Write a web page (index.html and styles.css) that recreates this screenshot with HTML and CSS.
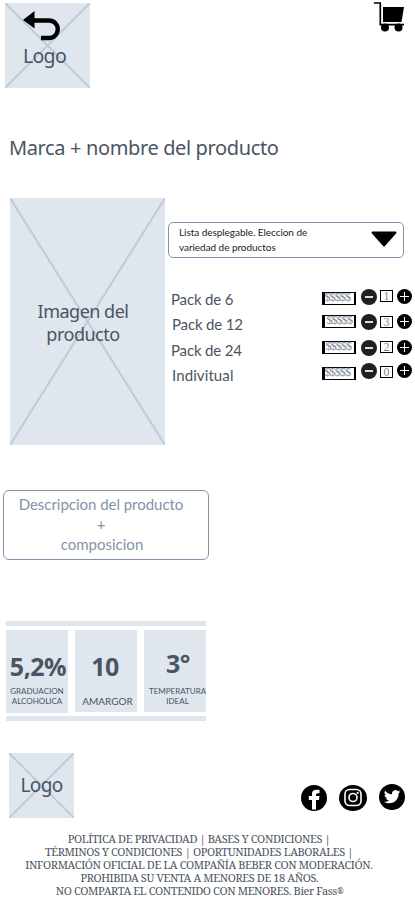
FILE: index.html
```html
<!DOCTYPE html>
<html lang="es">
<head>
<meta charset="utf-8">
<title>Marca + nombre del producto</title>
<link rel="stylesheet" href="styles.css">
</head>
<body>
<header class="top">
  <div class="box logo">
    <svg class="cross" viewBox="0 0 85 85" preserveAspectRatio="none"><path d="M0 0L85 85M85 0L0 85"/></svg>
    <svg class="back" viewBox="0 0 38 30"><path d="M9 9.500H26A8.700 8.700 0 0 1 26 27H18" fill="none" stroke="#000" stroke-width="4.400"/><path d="M0 9L11.500 0V17.500Z"/></svg>
    <span class="logo-text">Logo</span>
  </div>
  <svg class="cart" viewBox="0 0 31 30"><path d="M0 1H6.300V22.700H30" fill="none" stroke="#000" stroke-width="1.700"/><path d="M9 5H30L27.500 20H9Z"/><circle cx="11" cy="25.500" r="4"/><circle cx="24.500" cy="25.500" r="4"/></svg>
</header>
<h1 class="title">Marca + nombre del producto</h1>
<main class="product">
  <div class="box photo">
    <svg class="cross" viewBox="0 0 155 247" preserveAspectRatio="none"><path d="M0 0L155 247M155 0L0 247"/></svg>
    <span class="photo-text">Imagen del<br>producto</span>
  </div>
  <div class="options">
    <div class="select">
      <span>Lista desplegable. Eleccion de<br>variedad de productos</span>
      <svg class="caret" viewBox="0 0 26 16"><path d="M1.500 1.500H24.500L13 14.500Z" stroke="#000" stroke-width="2" stroke-linejoin="round"/></svg>
    </div>
    <div class="row r1"><span class="name">Pack de 6</span><span class="price">$$$$$</span><span class="btn minus"></span><span class="qty">1</span><span class="btn plus"></span></div>
    <div class="row r2"><span class="name">Pack de 12</span><span class="price">$$$$$</span><span class="btn minus"></span><span class="qty">3</span><span class="btn plus"></span></div>
    <div class="row r3"><span class="name">Pack de 24</span><span class="price">$$$$$</span><span class="btn minus"></span><span class="qty">2</span><span class="btn plus"></span></div>
    <div class="row r4"><span class="name">Indivitual</span><span class="price">$$$$$</span><span class="btn minus"></span><span class="qty">0</span><span class="btn plus"></span></div>
  </div>
</main>
<section class="description"><span class="d1">Descripcion del producto</span><span class="d2">+</span><span class="d3">composicion</span></section>
<section class="facts">
  <div class="card abv"><b>5,2%</b><small>GRADUACION<br>ALCOHOLICA</small></div>
  <div class="card ibu"><b>10</b><small>AMARGOR</small></div>
  <div class="card temp"><b>3°</b><small>TEMPERATURA<br>IDEAL</small></div>
</section>
<footer>
  <div class="brand">
    <div class="box foot-logo">
      <svg class="cross" viewBox="0 0 65 65" preserveAspectRatio="none"><path d="M0 0L65 65M65 0L0 65"/></svg>
      <span class="foot-text">Logo</span>
    </div>
    <div class="social">
      <svg class="fb" viewBox="0 0 26 26"><circle cx="13" cy="13" r="13"/><path d="M11 24.500V15H7.800V11H11V9Q11 4.800 15.500 4.800H18.500V8.300H16.800Q15 8.300 15 9.800V11H18.500L18 15H15V24.500Z" fill="#fff"/></svg>
      <svg class="ig" viewBox="0 0 28 28"><ellipse cx="14" cy="14" rx="14" ry="13"/><g fill="none" stroke="#fff" stroke-width="1.600"><rect x="6" y="5.500" width="16" height="16" rx="4.500"/><circle cx="14" cy="13.500" r="4"/></g><circle cx="18.700" cy="8.900" r="1.100" fill="#fff"/></svg>
      <svg class="tw" viewBox="0 0 26 26"><circle cx="13" cy="13" r="13"/><path transform="translate(5 4.500) scale(.68)" d="M23.950 4.570a10 10 0 0 1-2.820.77 4.960 4.960 0 0 0 2.160-2.720c-.950.550-2 .950-3.130 1.180a4.920 4.920 0 0 0-8.380 4.480C7.690 8.090 4.070 6.130 1.640 3.160a4.920 4.920 0 0 0 1.520 6.570 4.900 4.900 0 0 1-2.230-.61v.060a4.920 4.920 0 0 0 3.950 4.830 5 5 0 0 1-2.210.080 4.940 4.940 0 0 0 4.600 3.420A9.870 9.870 0 0 1 0 19.540a13.990 13.990 0 0 0 7.550 2.210c9.050 0 14-7.500 14-13.980 0-.21 0-.42-.020-.63a9.940 9.940 0 0 0 2.420-2.570z" fill="#fff"/></svg>
    </div>
  </div>
  <div class="legal">
    <p class="l1">POLÍTICA DE PRIVACIDAD | BASES Y CONDICIONES |</p>
    <p class="l2">TÉRMINOS Y CONDICIONES | OPORTUNIDADES LABORALES |</p>
    <p class="l3">INFORMACIÓN OFICIAL DE LA COMPAÑÍA BEBER CON MODERACIÓN.</p>
    <p class="l4">PROHIBIDA SU VENTA A MENORES DE 18 AÑOS.</p>
    <p class="l5">NO COMPARTA EL CONTENIDO CON MENORES. Bier Fass<span class="reg">®</span></p>
  </div>
</footer>
</body>
</html>
```
FILE: styles.css
```css
* { box-sizing: border-box; }
body { margin: 0; width: 415px; height: 915px; overflow: hidden; background: #fff; color: #4a5462; font-family: Lato, sans-serif; }
svg { display: block; flex: none; overflow: visible; }
.box { position: relative; background: #dfe6ee; flex: none; font-family: "Noto Sans", sans-serif; }
.cross { position: absolute; inset: 0; width: 100%; height: 100%; stroke: #c0cbda; stroke-width: 2; overflow: hidden; }
.top { display: flex; justify-content: space-between; padding: 3px 10px 0 5px; height: 88px; }
.logo { width: 85px; height: 85px; padding: 8px 0 0 18px; }
.back { position: relative; width: 38px; height: 30px; }
.logo-text { position: relative; display: block; font-size: 19.5px; letter-spacing: -.7px; line-height: 26px; margin-top: 2px; }
.cart { width: 31px; height: 30px; margin-top: -1px; }
.title { margin: 45px 0 0 9px; height: 65px; font: 400 20px/30px "Noto Sans", sans-serif; letter-spacing: -.37px; white-space: nowrap; }
.product { display: flex; padding-left: 10px; height: 247px; }
.photo { width: 155px; height: 247px; padding: 102px 9px 0 0; text-align: center; font-size: 18px; letter-spacing: -.5px; line-height: 23px; }
.photo-text { position: relative; }
.options { width: 250px; padding: 24px 0 0 3px; }
.select { width: 236px; height: 36px; border: 1px solid #8494ad; border-radius: 5px; display: flex; justify-content: space-between; padding: 2px 6px 0 10px; font-size: 10px; letter-spacing: -.05px; line-height: 15px; color: #222; white-space: nowrap; }
.caret { width: 26px; height: 16px; margin-top: 6px; }
.row { display: grid; grid-template-columns: 154px 39px 19px 17px 16px; align-items: start; height: 25px; }
.r1 { margin-top: 29px; }
.r2 { height: 26px; }
.name { padding-left: 3px; font-size: 15px; letter-spacing: -.15px; line-height: 25px; }
.r2 .name { padding-left: 4px; }
.r4 .name { padding-left: 4px; letter-spacing: .1px; }
.price { width: 34px; height: 13px; margin: 5px 0 0 -.5px; border: 1px solid #000; border-width: 1px 2px 1px 3px; font: 12px/9px "Liberation Serif", serif; letter-spacing: -.9px; color: #7d8795; text-align: left; white-space: nowrap; }
.r2 .price { margin-top: 3px; padding-left: 2px; }
.r3 .price { margin-top: 3px; padding-left: 1px; }
.r4 .price { margin-top: 4px; }
.qty { width: 13px; height: 12px; margin-top: 3px; border: 1px solid #000; font: 12px/11px "Liberation Serif", serif; color: #7d8795; text-align: center; }
.r2 .qty { margin-top: 4px; }
.btn { position: relative; display: grid; place-items: center; width: 16px; height: 16px; margin-top: 2px; border-radius: 50%; background: #231f20; }
.r4 .btn { margin-top: 0; }
.btn::before { content: ""; width: 8px; height: 2px; background: #ddd; grid-area: 1 / 1; }
.plus { width: 15px; height: 15px; background: #000; }
.plus::before { width: 9px; height: 1px; background: #fff; }
.plus::after { content: ""; width: 1px; height: 9px; background: #fff; grid-area: 1 / 1; }
.description { margin: 45px 0 0 3px; width: 206px; height: 70px; border: 1px solid #8494ad; border-radius: 6px; padding: 3px 10px 0 0; text-align: center; color: #8293ab; font-size: 15px; line-height: 20px; }
.description span { display: block; }
.d1 { letter-spacing: -.03px; }
.d3 { padding-left: 2px; }
.facts { margin: 61px 0 0 6px; width: 200px; height: 100px; border: solid #dfe6ee; border-width: 5px 0; padding-top: 4px; display: flex; gap: 7px; }
.card { width: 62px; height: 83px; background: #dfe6ee; text-align: center; white-space: nowrap; flex: none; }
.card b { display: block; font: 700 25px/30px "Noto Sans", sans-serif; letter-spacing: -.5px; }
.card small { display: block; font-size: 8px; line-height: 10px; }
.abv b { margin: 21px 0 0 2px; }
.abv small { margin-top: 5px; }
.ibu, .temp { height: 82px; }
.ibu b { margin: 21px 2px 0 0; }
.ibu small { margin: 12px 0 0 3px; font-size: 10px; line-height: 16px; }
.temp b { margin: 18px 0 0 6px; }
.temp small { margin: 8px 0 0 5px; }
.brand { display: flex; justify-content: space-between; margin-top: 32px; padding: 0 10px 0 9px; height: 65px; }
.foot-logo { width: 65px; height: 65px; display: flex; justify-content: center; padding-top: 19px; font-size: 19px; letter-spacing: -.6px; line-height: 26px; }
.foot-text { position: relative; }
.social { display: flex; gap: 12px; padding-top: 32px; }
.fb, .tw { width: 26px; height: 26px; }
.ig { width: 28px; height: 28px; margin-top: -1px; }
.tw { margin-top: -1px; }
.legal { margin-top: 14px; font: 11px/13px "Noto Serif", "Liberation Serif", serif; letter-spacing: -.39px; width: 398px; text-align: center; white-space: nowrap; }
.legal p { margin: 0; height: 13px; }
.l4, .l5 { padding-left: 1px; }
.reg { font-size: 8px; line-height: 1; vertical-align: 1px; }
```
